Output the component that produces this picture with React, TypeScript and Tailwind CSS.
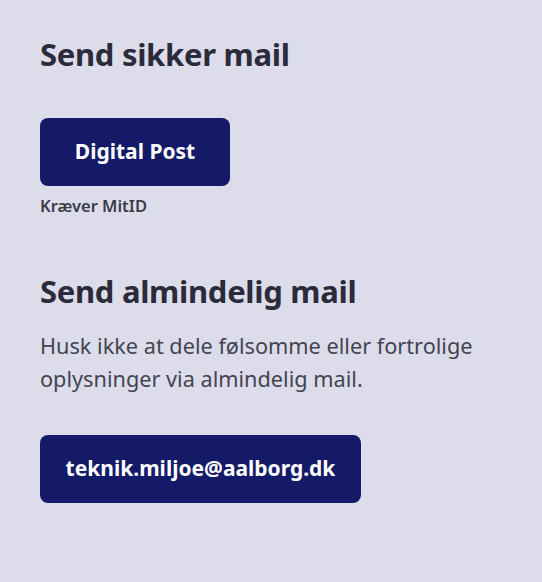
export default function App() {
  return (
    <div className="min-h-[582px] w-full bg-[#dcdcea] px-10 pt-[34px] text-[#2b2b3b] [font-family:'Noto_Sans',sans-serif]">
      <h2 className="text-[31px] font-bold leading-[40px] tracking-[-0.3px]">Send sikker mail</h2>
      <button className="mt-[44px] flex h-[68px] w-[190px] items-center justify-center rounded-lg bg-[#141a68] text-[21px] font-bold text-white">
        Digital Post
      </button>
      <p className="mt-[10px] text-[16.5px] font-semibold leading-5 text-[#3a3a48]">Kræver MitID</p>

      <h2 className="mt-[55px] text-[31px] font-bold leading-[40px] tracking-[-0.3px]">Send almindelig mail</h2>
      <p className="mt-[18px] text-[21.7px] leading-[33px] text-[#444452]">
        Husk ikke at dele følsomme eller fortrolige oplysninger via almindelig mail.
      </p>
      <button className="mt-[40px] flex h-[68px] w-[321px] items-center justify-center rounded-lg bg-[#141a68] text-[21px] font-bold text-white">
        teknik.miljoe@aalborg.dk
      </button>
    </div>
  );
}
